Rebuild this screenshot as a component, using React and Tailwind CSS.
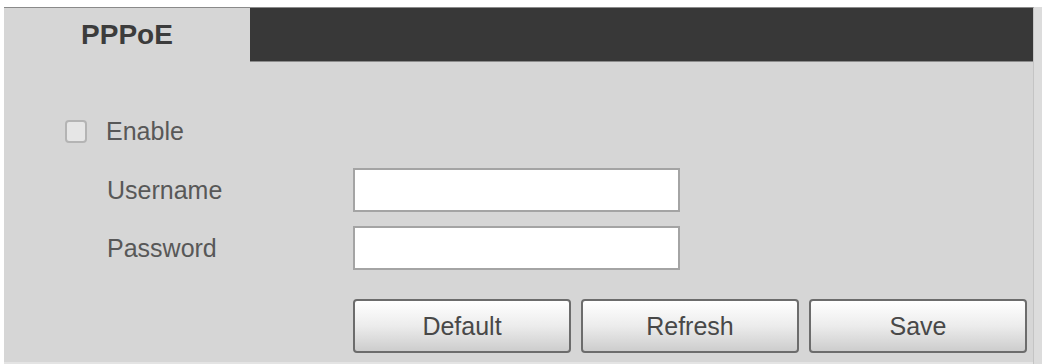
export default function App() {
  const font = { fontFamily: '"Liberation Sans", Arial, sans-serif' };
  return (
    <div className="w-[1042px] h-[364px] bg-white flex flex-col overflow-hidden" style={font}>
      <div className="h-[7px] shrink-0 bg-white" />
      <div className="flex flex-1 min-h-0">
        <div className="w-[4px] shrink-0 bg-white" />
        <div className="w-[1030px] shrink-0 flex flex-col bg-[#d6d6d6] border-t border-[#8a8a8a] border-r border-r-[#c4c4c4]">
          <div className="flex h-[54px] shrink-0">
            <div className="w-[246px] flex items-center justify-center">
              <span className="text-[28px] font-bold text-[#3c3c3c] leading-none">PPPoE</span>
            </div>
            <div className="flex-1 bg-[#383838] border-b border-[#8c8c8c]" />
          </div>

          <div className="flex items-center h-[44px] mt-[47px] pl-[61px]">
            <div className="w-[22px] h-[23px] rounded-[4px] border-2 border-[#b4b4b4] bg-[#e6e6e6]" />
            <span className="ml-[19px] text-[25px] text-[#585858] leading-none">Enable</span>
          </div>

          <div className="flex items-center h-[44px] mt-[15px] pl-[103px]">
            <span className="w-[246px] text-[25px] text-[#585858] leading-none">Username</span>
            <input className="w-[327px] h-[44px] bg-white border-2 border-[#a4a4a4] outline-none" />
          </div>

          <div className="flex items-center h-[44px] mt-[14px] pl-[103px]">
            <span className="w-[246px] text-[25px] text-[#585858] leading-none">Password</span>
            <input type="password" className="w-[327px] h-[44px] bg-white border-2 border-[#a4a4a4] outline-none" />
          </div>

          <div className="flex gap-[10px] mt-[29px] pl-[349px]">
            {["Default", "Refresh", "Save"].map((t) => (
              <button
                key={t}
                className="w-[218px] h-[54px] rounded-[4px] border-2 border-[#6c6c6c] bg-gradient-to-b from-[#ffffff] via-[#ececec] to-[#cdcdcd] text-[25px] text-[#484848] leading-none"
                style={font}
              >
                {t}
              </button>
            ))}
          </div>
          <div className="flex-1" />
          <div className="h-[2px] bg-[#e4e4e4]" />
        </div>
        <div className="flex-1 bg-[#dcdcdc]" />
      </div>
    </div>
  );
}
